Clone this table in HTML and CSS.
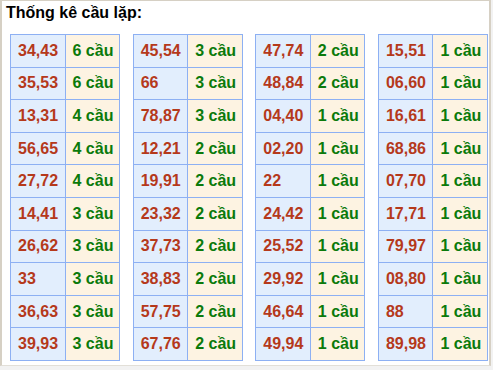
FILE: index.html
```html
<!DOCTYPE html>
<html lang="vi">
<head>
<meta charset="utf-8">
<title>Thống kê cầu lặp</title>
<link rel="stylesheet" href="styles.css">
</head>
<body>
<div class="box">
  <h2 class="title">Thống kê cầu lặp:</h2>
  <div class="tables">
    <table class="stat">
      <tr><td class="num">34,43</td><td class="cnt">6 cầu</td></tr>
      <tr><td class="num">35,53</td><td class="cnt">6 cầu</td></tr>
      <tr><td class="num">13,31</td><td class="cnt">4 cầu</td></tr>
      <tr><td class="num">56,65</td><td class="cnt">4 cầu</td></tr>
      <tr><td class="num">27,72</td><td class="cnt">4 cầu</td></tr>
      <tr><td class="num">14,41</td><td class="cnt">3 cầu</td></tr>
      <tr><td class="num">26,62</td><td class="cnt">3 cầu</td></tr>
      <tr><td class="num">33</td><td class="cnt">3 cầu</td></tr>
      <tr><td class="num">36,63</td><td class="cnt">3 cầu</td></tr>
      <tr><td class="num">39,93</td><td class="cnt">3 cầu</td></tr>
    </table>
    <table class="stat">
      <tr><td class="num">45,54</td><td class="cnt">3 cầu</td></tr>
      <tr><td class="num">66</td><td class="cnt">3 cầu</td></tr>
      <tr><td class="num">78,87</td><td class="cnt">3 cầu</td></tr>
      <tr><td class="num">12,21</td><td class="cnt">2 cầu</td></tr>
      <tr><td class="num">19,91</td><td class="cnt">2 cầu</td></tr>
      <tr><td class="num">23,32</td><td class="cnt">2 cầu</td></tr>
      <tr><td class="num">37,73</td><td class="cnt">2 cầu</td></tr>
      <tr><td class="num">38,83</td><td class="cnt">2 cầu</td></tr>
      <tr><td class="num">57,75</td><td class="cnt">2 cầu</td></tr>
      <tr><td class="num">67,76</td><td class="cnt">2 cầu</td></tr>
    </table>
    <table class="stat">
      <tr><td class="num">47,74</td><td class="cnt">2 cầu</td></tr>
      <tr><td class="num">48,84</td><td class="cnt">2 cầu</td></tr>
      <tr><td class="num">04,40</td><td class="cnt">1 cầu</td></tr>
      <tr><td class="num">02,20</td><td class="cnt">1 cầu</td></tr>
      <tr><td class="num">22</td><td class="cnt">1 cầu</td></tr>
      <tr><td class="num">24,42</td><td class="cnt">1 cầu</td></tr>
      <tr><td class="num">25,52</td><td class="cnt">1 cầu</td></tr>
      <tr><td class="num">29,92</td><td class="cnt">1 cầu</td></tr>
      <tr><td class="num">46,64</td><td class="cnt">1 cầu</td></tr>
      <tr><td class="num">49,94</td><td class="cnt">1 cầu</td></tr>
    </table>
    <table class="stat">
      <tr><td class="num">15,51</td><td class="cnt">1 cầu</td></tr>
      <tr><td class="num">06,60</td><td class="cnt">1 cầu</td></tr>
      <tr><td class="num">16,61</td><td class="cnt">1 cầu</td></tr>
      <tr><td class="num">68,86</td><td class="cnt">1 cầu</td></tr>
      <tr><td class="num">07,70</td><td class="cnt">1 cầu</td></tr>
      <tr><td class="num">17,71</td><td class="cnt">1 cầu</td></tr>
      <tr><td class="num">79,97</td><td class="cnt">1 cầu</td></tr>
      <tr><td class="num">08,80</td><td class="cnt">1 cầu</td></tr>
      <tr><td class="num">88</td><td class="cnt">1 cầu</td></tr>
      <tr><td class="num">89,98</td><td class="cnt">1 cầu</td></tr>
    </table>
  </div>
</div>
</body>
</html>
```
FILE: styles.css
```css
html, body {
  margin: 0;
  padding: 0;
  background: #f2f2f2;
}
body {
  font-family: "Liberation Sans", Arial, sans-serif;
}
.box {
  width: 487px;
  height: 364px;
  background: #ffffff;
  border-top: 1px solid #d6d0c4;
  border-left: 2px solid #d6d0c4;
  border-right: 2px solid #d6d0c4;
  border-bottom: 1px solid #e2dfd8;
  box-sizing: content-box;
}
.title {
  margin: 0;
  padding: 2px 0 0 4px;
  height: 33px;
  box-sizing: border-box;
  font-size: 16px;
  font-weight: bold;
  line-height: 20px;
  color: #000000;
}
.tables {
  display: flex;
  justify-content: space-between;
  padding: 0 1px 0 8px;
}
.stat {
  border-collapse: collapse;
  width: 110px;
  table-layout: fixed;
}
.stat tr {
  height: 32.6px;
}
.stat td {
  border: 1px solid #8db0f3;
  padding: 0 0 0 7px;
  font-size: 16px;
  font-weight: bold;
  white-space: nowrap;
  vertical-align: middle;
}
.num {
  background: #e2eefd;
  color: #b5391b;
}
.cnt {
  background: #fdf3e2;
  color: #0b7a0b;
}
```
